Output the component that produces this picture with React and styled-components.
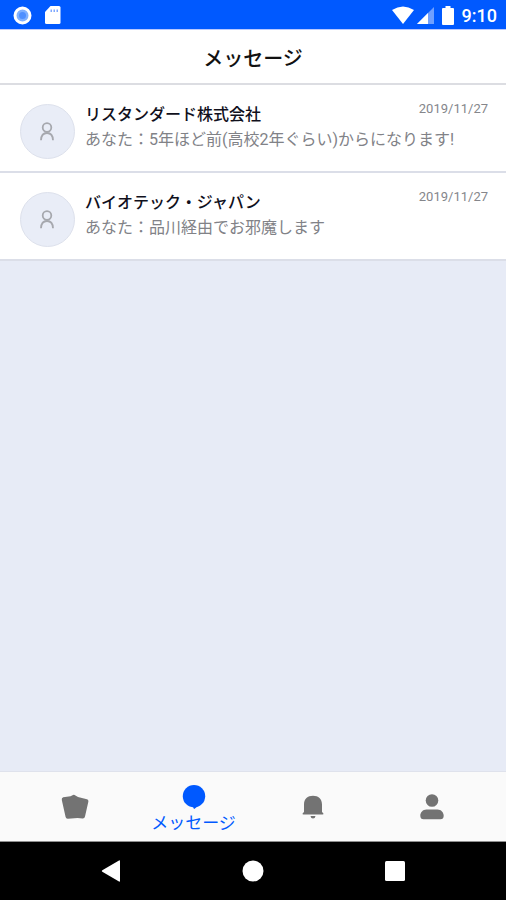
import React, { useState } from 'react';
import styled, { createGlobalStyle } from 'styled-components';

const GlobalStyle = createGlobalStyle`
    * {
        box-sizing: border-box;
    }
    body {
        margin: 0;
        font-family: Roboto, 'Noto Sans CJK JP', sans-serif;
        background: #e7ebf6;
    }
    button {
        border: 0;
        padding: 0;
        background: none;
        font: inherit;
        cursor: pointer;
    }
`;

let Screen = styled.div`
    display: flex;
    flex-direction: column;
    min-height: 100vh;
`;

let StatusBar = styled.div`
    display: flex;
    align-items: center;
    justify-content: space-between;
    height: 30px;
    padding: 0 9px 0 12px;
    color: #fff;
    background: #0059ff;
    border-bottom: 1px solid #b9c8ff;
`;

let StatusGroup = styled.div`
    display: flex;
    align-items: center;
    gap: ${(props) => props.$gap};
`;

let Clock = styled.span`
    font-size: 18px;
    line-height: 20px;
    font-weight: 500;
    padding-top: 2px;
`;

let Header = styled.header`
    padding: 14px 0 9px;
    text-align: center;
    background: #fff;
    border-bottom: 2px solid #dcdde2;
`;

let Title = styled.h1`
    margin: 0;
    font-size: 20px;
    line-height: 30px;
    font-weight: 500;
    color: #111;
`;

let List = styled.ul`
    flex: 1;
    margin: 0;
    padding: 0;
    list-style: none;
`;

let Row = styled.li`
    display: flex;
    align-items: flex-start;
    gap: 10px;
    height: 88px;
    padding: 19px 18px 0 20px;
    background: #fff;
    border-bottom: 2px solid #dbdee8;
`;

let Avatar = styled.div`
    display: flex;
    align-items: center;
    justify-content: center;
    flex: none;
    width: 55px;
    height: 55px;
    border: 1px solid #dde1ec;
    border-radius: 50%;
    background: #e9edf7;
`;

let RowBody = styled.div`
    flex: 1;
    min-width: 0;
`;

let RowTop = styled.div`
    display: flex;
    align-items: flex-start;
    justify-content: space-between;
`;

let Company = styled.h2`
    margin: 0;
    font-size: 16px;
    line-height: 22px;
    font-weight: 500;
    color: #10101c;
`;

let SentAt = styled.time`
    font-size: 13px;
    line-height: 16px;
    margin-top: -3px;
    color: #85868b;
`;

let Preview = styled.p`
    margin: 2px 0 0;
    font-size: 16px;
    line-height: 24px;
    white-space: nowrap;
    color: #818287;
`;

let TabBar = styled.nav`
    display: flex;
    height: 71px;
    padding: 0 15px;
    background: #fafafa;
    border-top: 1px solid #dfe2ec;
    border-bottom: 1px solid #8f8f8f;
`;

let Tab = styled.button`
    display: flex;
    flex: 1;
    flex-direction: column;
    align-items: center;
    justify-content: center;
    gap: 2px;
    padding-top: ${(props) => (props.$active ? '6px' : '0')};
    color: ${(props) => (props.$active ? '#0059ff' : '#737373')};
`;

let TabLabel = styled.span`
    font-size: 17px;
    line-height: 24px;
`;

let SystemBar = styled.div`
    display: flex;
    height: 58px;
    padding: 0 40px;
    background: #000;
`;

let SystemButton = styled.button`
    display: flex;
    flex: 1;
    align-items: center;
    justify-content: center;
    color: #fff;
`;

let messages = [
    {
        company: 'リスタンダード株式会社',
        preview: 'あなた：5年ほど前(高校2年ぐらい)からになります!',
        date: '2019/11/27',
    },
    {
        company: 'バイオテック・ジャパン',
        preview: 'あなた：品川経由でお邪魔します',
        date: '2019/11/27',
    },
];

let tabs = [
    { label: 'カード', icon: <CardsIcon /> },
    { label: 'メッセージ', icon: <ChatIcon /> },
    { label: 'お知らせ', icon: <BellIcon /> },
    { label: 'プロフィール', icon: <ProfileIcon /> },
];

function CardsIcon() {
    return (
        <svg width="28" height="26" viewBox="0 0 28 26" fill="currentColor">
            <path d="M2.2 3.2 9.5 2.2 12 1Q13.2.6 14.4 1.4L17 3 26 5.2Q27.600 5.800 27.400 7.400L24 22.500Q23.600 24.600 21.600 24.500L16.500 24 7 24.700Q5 24.900 4.600 23L.8 6Q.4 3.600 2.200 3.200Z" />
        </svg>
    );
}

function ChatIcon() {
    return (
        <svg width="24" height="24" viewBox="0 0 24 24" fill="currentColor">
            <circle cx="12" cy="11.200" r="11.200" />
            <path d="M11 21.500 11.700 23.500Q12.100 24.200 12.900 23.600L18 19.500Z" />
        </svg>
    );
}

function BellIcon() {
    return (
        <svg width="22" height="24" viewBox="0 0 22 24" fill="currentColor">
            <path d="M2 17V9.500C2 4.200 5.600.8 11 .8s9 3.400 9 8.700V17l1.300 1.200q.6 1.300-.8 1.300h-19q-1.400 0-.8-1.300ZM8.500 21h5q-.4 2.500-2.500 2.500T8.500 21Z" />
        </svg>
    );
}

function ProfileIcon() {
    return (
        <svg width="24" height="26" viewBox="0 0 24 26" fill="currentColor">
            <circle cx="12" cy="6.500" r="6.300" />
            <path d="M6.500 15.500h11c3.600 0 6.200 3 6.200 6.200 0 2.400-1.200 3.600-3.200 3.600h-17C1.500 25.300.3 24.100.3 21.700c0-3.200 2.600-6.200 6.200-6.200Z" />
        </svg>
    );
}

function PersonIcon() {
    return (
        <svg width="15" height="20" viewBox="0 0 15 20" fill="none" stroke="#a6a8ae" strokeWidth="1.800">
            <circle cx="7" cy="5.500" r="4.300" />
            <path d="M1 18.200C1.200 13.500 3.500 11 7 11S12.800 13.500 13 18.200" />
        </svg>
    );
}

function StatusIcons() {
    return (
        <StatusBar>
            <StatusGroup $gap="11px">
                <svg width="21" height="20" viewBox="0 0 21 20">
                    <circle cx="10.500" cy="10.500" r="7.500" fill="#7fb0ff" stroke="#fff" strokeWidth="3" />
                    <circle cx="10.500" cy="10.500" r="3.500" fill="#4f8fff" />
                </svg>
                <svg width="18" height="20" viewBox="0 0 18 20">
                    <path d="M6.500 1H15q1.500 0 1.500 1.500v15Q16.500 19 15 19H2.500Q1 19 1 17.500V7Z" fill="#fff" />
                    <path d="M6.500 4.500h1.500v2.500H6.500zM9.500 4.500H11v2.500H9.500zM12.500 4.500H14v2.500h-1.500z" fill="#7fa8ff" />
                </svg>
            </StatusGroup>
            <StatusGroup $gap="8px">
                <StatusGroup $gap="3px">
                    <svg width="22" height="20" viewBox="0 0 22 20">
                        <path d="M0 5Q11-2 22 5L11 19Z" fill="#fff" />
                    </svg>
                    <svg width="17" height="20" viewBox="0 0 17 20">
                        <path d="M0 19 17 2V19Z" fill="#6f9fff" />
                        <path d="M0 19 11 8V19Z" fill="#fff" />
                    </svg>
                </StatusGroup>
                <svg width="12" height="20" viewBox="0 0 12 20">
                    <path d="M3.500 1h5v2H11q1 0 1 1v15q0 1-1 1H1q-1 0-1-1V4q0-1 1-1h2.500Z" fill="#fff" />
                </svg>
                <Clock>9:10</Clock>
            </StatusGroup>
        </StatusBar>
    );
}

function Message(props) {
    return (
        <Row>
            <Avatar>
                <PersonIcon />
            </Avatar>
            <RowBody>
                <RowTop>
                    <Company>{props.message.company}</Company>
                    <SentAt>{props.message.date}</SentAt>
                </RowTop>
                <Preview>{props.message.preview}</Preview>
            </RowBody>
        </Row>
    );
}

function App() {

    let [ activeTab, activeTabChange ] = useState(1);

    return (
        <Screen>
            <GlobalStyle />
            <StatusIcons />
            <Header>
                <Title>メッセージ</Title>
            </Header>

            <List>
                {
                    messages.map((message, i) => <Message message={message} key={i} />)
                }
            </List>

            <TabBar>
                {
                    tabs.map((tab, i) => (
                        <Tab key={i} $active={activeTab === i} aria-label={tab.label} onClick={()=>{ activeTabChange(i); }}>
                            {tab.icon}
                            {
                                activeTab === i
                                ? <TabLabel>{tab.label}</TabLabel>
                                : null
                            }
                        </Tab>
                    ))
                }
            </TabBar>

            <SystemBar>
                <SystemButton aria-label="戻る">
                    <svg width="20" height="22" viewBox="0 0 20 22" fill="currentColor">
                        <path d="M18 .5Q19 0 19 1.200V20.800Q19 22 18 21.500L1.300 11.800Q.2 11 1.300 10.200Z" />
                    </svg>
                </SystemButton>
                <SystemButton aria-label="ホーム">
                    <svg width="22" height="22" viewBox="0 0 22 22" fill="currentColor">
                        <circle cx="11" cy="11" r="10.500" />
                    </svg>
                </SystemButton>
                <SystemButton aria-label="アプリ履歴">
                    <svg width="20" height="20" viewBox="0 0 20 20" fill="currentColor">
                        <rect width="20" height="20" rx="1.500" />
                    </svg>
                </SystemButton>
            </SystemBar>
        </Screen>
    );
}

export default App;
